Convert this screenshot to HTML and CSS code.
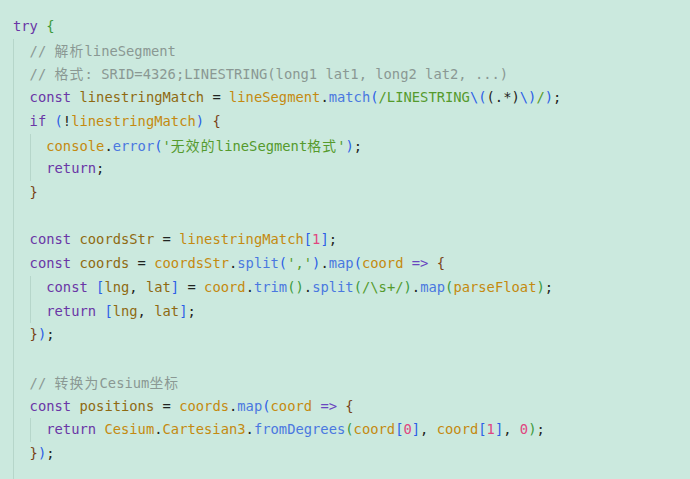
FILE: index.html
```html
<!DOCTYPE html>
<html lang="zh">
<head>
<meta charset="utf-8">
<link rel="stylesheet" href="styles.css">
</head>
<body>
<div class="code">
<div class="ln"><span class="kw">try</span> <span class="bg">{</span></div>
<div class="blk outer">
<div class="ln"><span class="cm">// <span class="cjk">解析</span>lineSegment</span></div>
<div class="ln"><span class="cm">// <span class="cjk">格式</span>: SRID=4326;LINESTRING(long1 lat1, long2 lat2, ...)</span></div>
<div class="ln"><span class="kw">const</span> <span class="dv">linestringMatch</span> = <span class="id">lineSegment</span>.<span class="fn">match</span><span class="bb">(</span><span class="st">/LINESTRING</span><span class="bb">\(</span>(.*)<span class="bb">\)</span><span class="st">/</span><span class="bb">)</span>;</div>
<div class="ln"><span class="kw">if</span> <span class="bb">(</span>!<span class="id">linestringMatch</span><span class="bb">)</span> <span class="br">{</span></div>
<div class="blk">
<div class="ln"><span class="id">console</span>.<span class="fn">error</span><span class="bb">(</span><span class="st">'<span class="cjk">无效的</span>lineSegment<span class="cjk">格式</span>'</span><span class="bb">)</span>;</div>
<div class="ln"><span class="kw">return</span>;</div>
</div>
<div class="ln"><span class="br">}</span></div>
<div class="ln"> </div>
<div class="ln"><span class="kw">const</span> <span class="dv">coordsStr</span> = <span class="id">linestringMatch</span><span class="bb">[</span><span class="nm">1</span><span class="bb">]</span>;</div>
<div class="ln"><span class="kw">const</span> <span class="dv">coords</span> = <span class="id">coordsStr</span>.<span class="fn">split</span><span class="bb">(</span><span class="st">','</span><span class="bb">)</span>.<span class="fn">map</span><span class="bb">(</span><span class="id">coord</span> <span class="op">=&gt;</span> <span class="br">{</span></div>
<div class="blk">
<div class="ln"><span class="kw">const</span> <span class="bb">[</span><span class="dv">lng</span>, <span class="dv">lat</span><span class="bb">]</span> = <span class="id">coord</span>.<span class="fn">trim</span><span class="bg">()</span>.<span class="fn">split</span><span class="bg">(</span><span class="st">/\s+/</span><span class="bg">)</span>.<span class="fn">map</span><span class="bg">(</span><span class="id">parseFloat</span><span class="bg">)</span>;</div>
<div class="ln"><span class="kw">return</span> <span class="bb">[</span><span class="dv">lng</span>, <span class="dv">lat</span><span class="bb">]</span>;</div>
</div>
<div class="ln"><span class="br">}</span><span class="bb">)</span>;</div>
<div class="ln"> </div>
<div class="ln"><span class="cm">// <span class="cjk">转换为</span>Cesium<span class="cjk">坐标</span></span></div>
<div class="ln"><span class="kw">const</span> <span class="dv">positions</span> = <span class="id">coords</span>.<span class="fn">map</span><span class="bb">(</span><span class="id">coord</span> <span class="op">=&gt;</span> <span class="br">{</span></div>
<div class="blk">
<div class="ln"><span class="kw">return</span> <span class="id">Cesium</span>.<span class="id">Cartesian3</span>.<span class="fn">fromDegrees</span><span class="bg">(</span><span class="id">coord</span><span class="bb">[</span><span class="nm">0</span><span class="bb">]</span>, <span class="id">coord</span><span class="bb">[</span><span class="nm">1</span><span class="bb">]</span>, <span class="nm">0</span><span class="bg">)</span>;</div>
</div>
<div class="ln"><span class="br">}</span><span class="bb">)</span>;</div>
</div>
</div>
</body>
</html>
```
FILE: styles.css
```css
html, body {
  margin: 0;
  padding: 0;
  background: #cbe9de;
  height: 100%;
  overflow: hidden;
}
.code {
  box-sizing: border-box;
  height: 100vh;
  display: flex;
  flex-direction: column;
  padding: 15px 0 0 13px;
  font-family: "DejaVu Sans Mono", "Noto Sans CJK SC", monospace;
  font-size: 13.8px;
  color: #1f2421;
}
.ln {
  white-space: pre;
  height: 23.72px;
  line-height: 23.72px;
}
.blk {
  border-left: 1px solid #b6d6ca;
  padding-left: calc(2ch - 1px);
}
.outer {
  flex: 1;
}
.cjk {
  font-family: "Noto Sans CJK SC", sans-serif;
  letter-spacing: 1.2px;
}
.kw { color: #6a36a6; }
.op { color: #6a45c0; }
.cm { color: #8a9893; }
.dv { color: #8f6a12; }
.id { color: #c48a10; }
.fn { color: #4a78e0; }
.st { color: #559a2c; }
.nm { color: #e04680; }
.bb { color: #2d5fe6; }
.bg { color: #3c9a3c; }
.br { color: #7a4418; }
```
